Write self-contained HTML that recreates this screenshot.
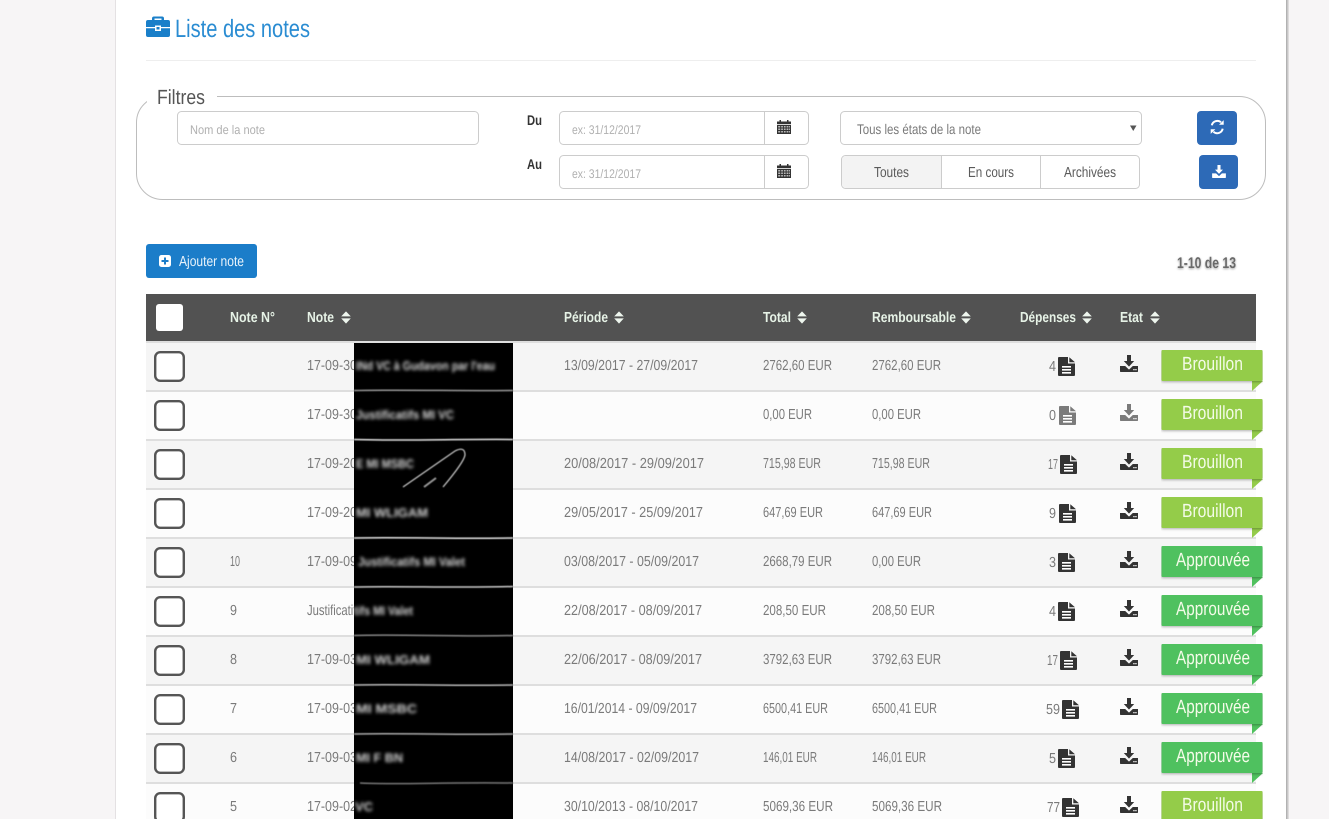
<!DOCTYPE html>
<html lang="fr"><head><meta charset="utf-8"><title>Liste des notes</title>
<style>
html,body{margin:0;padding:0;width:1329px;height:819px;overflow:hidden;background:#f7f5f6}
svg{display:block}
text{font-family:"Liberation Sans",sans-serif;text-rendering:geometricPrecision}
.c{font-size:14.500px;fill:#7a7a7a}
.h{font-size:14.500px;fill:#e6f2e6;font-weight:bold}
.b{font-size:19px;fill:#f4fbe8}
.p{font-size:12.500px;fill:#b0b0b0}
.g{font-size:14.500px;fill:#5a5a5a}
.r{font-size:12.500px;fill:#d8d8d8;filter:url(#bl);font-weight:bold}
</style></head><body>
<svg width="1329" height="819" viewBox="0 0 1329 819" xmlns="http://www.w3.org/2000/svg">
<defs>
<filter id="bl" x="-10%" y="-80%" width="120%" height="260%"><feGaussianBlur stdDeviation="1.500"/></filter>
<filter id="bl2" x="-10%" y="-60%" width="120%" height="220%"><feGaussianBlur stdDeviation=".6"/></filter>
<filter id="ts" x="-10%" y="-40%" width="120%" height="180%"><feDropShadow dx="0" dy="1" stdDeviation="1" flood-color="#000" flood-opacity=".35"/></filter>
<filter id="bs" x="-5%" y="-10%" width="110%" height="130%"><feDropShadow dx="0" dy="1" stdDeviation="1.200" flood-color="#000" flood-opacity=".3"/></filter>
<linearGradient id="sh" x1="0" x2="1" y1="0" y2="0"><stop offset="0" stop-color="#a8a8a8"/><stop offset="1" stop-color="#e8e6e7"/></linearGradient>
<symbol id="sort" viewBox="0 0 10 13" width="10" height="13"><path d="M.2 5.400 5 .4l4.800 5Z M.2 7.400h9.600L5 12.600Z" fill="#eef6ee"/></symbol>
<symbol id="doc" viewBox="0 0 17 19" width="17" height="19"><path d="M1 0H10V6.500H17V18a1 1 0 0 1-1 1H1a1 1 0 0 1-1-1V1a1 1 0 0 1 1-1Z M11.300 0.200 17 5.200H11.300Z" fill="currentColor"/><path d="M4 9h9v1.600H4Zm0 3h9v1.600H4Zm0 3h9v1.600H4Z" fill="#fff"/></symbol>
<symbol id="dl" viewBox="0 0 18 17" width="18" height="17"><path d="M7 0h4v6h3.200L9 11.600 3.800 6H7Z M0 11h5.200L9 14.600 12.800 11H18v5.200a.8.8 0 0 1-.8.8H.8a.8.8 0 0 1-.8-.8Z" fill="currentColor"/><path d="M13.300 14h1.300v1.300h-1.300Zm2 0h1.300v1.300h-1.300Z" fill="#fff"/></symbol>
<symbol id="cal" viewBox="0 0 14 14" width="14" height="14"><path d="M2.500 0h1.500v1.500h6V0h1.500v1.500H14V4H0V1.500h2.500Z" fill="#333"/><path d="M0 4.800h14V14H0Z" fill="#333"/><path d="M1.200 6h2v1.500h-2Zm3 0h1.700v1.500H4.200Zm2.700 0h1.700v1.500H6.900Zm2.700 0h1.700v1.500H9.600Zm2.300 0h1v1.500h-1ZM1.200 8.500h2V10h-2Zm3 0h1.700V10H4.200Zm2.700 0h1.700V10H6.900Zm2.700 0h1.700V10H9.600Zm2.300 0h1V10h-1ZM1.200 11h2v1.500h-2Zm3 0h1.700v1.500H4.200Zm2.700 0h1.700v1.500H6.900Zm2.700 0h1.700v1.500H9.600Zm2.300 0h1v1.500h-1Z" fill="#b9b9b9"/></symbol>
<symbol id="cb" viewBox="0 0 31 31" width="31" height="31"><rect x="1.200" y="1.200" width="28.600" height="28.600" rx="5" fill="#fff" stroke="#555" stroke-width="2.400"/></symbol>
<symbol id="bB" viewBox="0 0 102 42" width="102" height="42"><path d="M91 31h11L91 41Z" fill="#94cc4a"/><rect x="0.500" y="0" width="101" height="31" rx="1" fill="#94cc4a" filter="url(#bs)"/></symbol>
<symbol id="bA" viewBox="0 0 102 42" width="102" height="42"><path d="M91 31h11L91 41Z" fill="#50c15e"/><rect x="0.500" y="0" width="101" height="31" rx="1" fill="#50c15e" filter="url(#bs)"/></symbol>
</defs>

<!-- panel -->
<rect x="115" y="0" width="1" height="819" fill="#e4e1e3"/>
<rect x="116" y="0" width="1170" height="819" fill="#fff"/>
<rect x="1286" y="0" width="3" height="819" fill="url(#sh)"/>

<!-- title -->
<path d="M154 16.500h8a2 2 0 0 1 2 2V20h4a2 2 0 0 1 2 2v5h-9v-1.500h-6V27h-9v-5a2 2 0 0 1 2-2h4v-1.500a2 2 0 0 1 2-2Zm.500 2V20h7v-1.500Z" fill="#1a7fc9" fill-rule="evenodd"/>
<path d="M146 28.300h9V31h6v-2.700h9V35a2 2 0 0 1-2 2h-20a2 2 0 0 1-2-2Zm10.500-1.300h3v2.500h-3Z" fill="#1a7fc9"/>
<text x="175" y="37" font-size="25" fill="#2a8cd2" textLength="135" lengthAdjust="spacingAndGlyphs">Liste des notes</text>
<rect x="146" y="60" width="1110" height="1" fill="#eee"/>

<!-- filters -->
<rect x="136.500" y="96.500" width="1129" height="103" rx="26" fill="#fff" stroke="#bdbdbd"/>
<rect x="147" y="90" width="70" height="14" fill="#fff"/>
<text x="157" y="104" font-size="20.500" fill="#555" textLength="48" lengthAdjust="spacingAndGlyphs">Filtres</text>

<rect x="177.500" y="111.500" width="301" height="33" rx="4" fill="#fff" stroke="#ccc"/>
<text class="p" x="190" y="134" textLength="75" lengthAdjust="spacingAndGlyphs">Nom de la note</text>

<text x="527" y="125" font-size="14" font-weight="bold" fill="#333" textLength="15" lengthAdjust="spacingAndGlyphs">Du</text>
<text x="527" y="169" font-size="14" font-weight="bold" fill="#333" textLength="15" lengthAdjust="spacingAndGlyphs">Au</text>

<rect x="559.500" y="111.500" width="249" height="33" rx="4" fill="#fff" stroke="#ccc"/>
<rect x="764" y="112" width="1" height="32" fill="#ccc"/>
<text class="p" x="572" y="134" textLength="69" lengthAdjust="spacingAndGlyphs">ex: 31/12/2017</text>
<use href="#cal" x="777" y="120"/>
<rect x="559.500" y="155.500" width="249" height="33" rx="4" fill="#fff" stroke="#ccc"/>
<rect x="764" y="156" width="1" height="32" fill="#ccc"/>
<text class="p" x="572" y="178" textLength="69" lengthAdjust="spacingAndGlyphs">ex: 31/12/2017</text>
<use href="#cal" x="777" y="164"/>

<rect x="840.500" y="111.500" width="301" height="33" rx="4" fill="#fff" stroke="#ccc"/>
<text x="857" y="134" font-size="14" fill="#7a7a7a" textLength="124" lengthAdjust="spacingAndGlyphs">Tous les états de la note</text>
<path d="M1130 125.500h6.500l-3.250 5.500Z" fill="#555"/>

<rect x="841.500" y="155.500" width="298" height="33" rx="4" fill="#fff" stroke="#ccc"/>
<path d="M842 160a4 4 0 0 1 4-4h95.500v32H846a4 4 0 0 1-4-4Z" fill="#f3f3f3"/>
<rect x="941" y="156" width="1" height="32" fill="#ccc"/>
<rect x="1040" y="156" width="1" height="32" fill="#ccc"/>
<text class="g" x="874" y="177" textLength="35" lengthAdjust="spacingAndGlyphs">Toutes</text>
<text class="g" x="968" y="177" textLength="46" lengthAdjust="spacingAndGlyphs">En cours</text>
<text class="g" x="1064" y="177" textLength="52" lengthAdjust="spacingAndGlyphs">Archivées</text>

<rect x="1197" y="111" width="40" height="34" rx="4" fill="#2d6ab7"/>
<path d="M1211.800 125.300A5.600 5.600 0 0 1 1221 122.300M1222.700 128.700A5.600 5.600 0 0 1 1213.400 131.700" fill="none" stroke="#fff" stroke-width="2"/>
<path d="M1219 124.800h4.700v-4.700ZM1215.400 129.200h-4.700v4.700Z" fill="#fff"/>
<rect x="1199" y="155" width="39" height="34" rx="4" fill="#2d6ab7"/>
<g color="#fff"><use href="#dl" x="1212" y="165" width="14" height="13"/></g>

<!-- add button -->
<rect x="146" y="244" width="111" height="34" rx="3" fill="#1b7dc9"/>
<rect x="159" y="255" width="12" height="12" rx="2.500" fill="#fff"/>
<path d="M164 257.500h2v2.500h2.500v2H166v2.500h-2V262h-2.500v-2h2.500Z" fill="#1b7dc9"/>
<text x="179" y="266" font-size="14.500" fill="#e8f2fa" textLength="65" lengthAdjust="spacingAndGlyphs">Ajouter note</text>

<text x="1177" y="268" font-size="15.500" font-weight="bold" fill="#6a6a6a" filter="url(#ts)" textLength="59" lengthAdjust="spacingAndGlyphs">1-10 de 13</text>

<!-- table head -->
<rect x="146" y="294" width="1110" height="47" fill="#525252"/>
<rect x="156" y="304" width="27" height="27" rx="3" fill="#fff"/>
<text class="h" x="230" y="322" textLength="45" lengthAdjust="spacingAndGlyphs">Note N°</text>
<text class="h" x="307" y="322" textLength="27" lengthAdjust="spacingAndGlyphs">Note</text><use href="#sort" x="341" y="311"/>
<text class="h" x="564" y="322" textLength="44" lengthAdjust="spacingAndGlyphs">Période</text><use href="#sort" x="614" y="311"/>
<text class="h" x="763" y="322" textLength="28" lengthAdjust="spacingAndGlyphs">Total</text><use href="#sort" x="797" y="311"/>
<text class="h" x="872" y="322" textLength="84" lengthAdjust="spacingAndGlyphs">Remboursable</text><use href="#sort" x="961" y="311"/>
<text class="h" x="1020" y="322" textLength="56" lengthAdjust="spacingAndGlyphs">Dépenses</text><use href="#sort" x="1082" y="311"/>
<text class="h" x="1120" y="322" textLength="23" lengthAdjust="spacingAndGlyphs">Etat</text><use href="#sort" x="1150" y="311"/>

<!-- row backgrounds -->
<rect x="146" y="341" width="1110" height="478" fill="#fcfcfc"/>
<rect x="146" y="343" width="1110" height="47" fill="#f5f5f5"/>
<rect x="146" y="441" width="1110" height="47" fill="#f5f5f5"/>
<rect x="146" y="539" width="1110" height="47" fill="#f5f5f5"/>
<rect x="146" y="637" width="1110" height="47" fill="#f5f5f5"/>
<rect x="146" y="735" width="1110" height="47" fill="#f5f5f5"/>
<path d="M146 341h1110v2H146Zm0 49h1110v2H146Zm0 49h1110v2H146Zm0 49h1110v2H146Zm0 49h1110v2H146Zm0 49h1110v2H146Zm0 49h1110v2H146Zm0 49h1110v2H146Zm0 49h1110v2H146Zm0 49h1110v2H146Z" fill="#dedede"/>

<!-- row 1 -->
<use href="#cb" x="154" y="351"/>
<text class="c" x="307" y="370" textLength="50" lengthAdjust="spacingAndGlyphs">17-09-30</text>
<text class="c" x="564" y="370" textLength="134" lengthAdjust="spacingAndGlyphs">13/09/2017 - 27/09/2017</text>
<text class="c" x="763" y="370" textLength="69" lengthAdjust="spacingAndGlyphs">2762,60 EUR</text>
<text class="c" x="872" y="370" textLength="69" lengthAdjust="spacingAndGlyphs">2762,60 EUR</text>
<text class="c" x="1049" y="371" textLength="7" lengthAdjust="spacingAndGlyphs">4</text>
<g color="#333"><use href="#doc" x="1058" y="357"/><use href="#dl" x="1120" y="355"/></g>
<use href="#bB" x="1161" y="350"/>
<text class="b" x="1182" y="370" textLength="61" lengthAdjust="spacingAndGlyphs">Brouillon</text>

<!-- row 2 -->
<use href="#cb" x="154" y="400"/>
<text class="c" x="307" y="419" textLength="50" lengthAdjust="spacingAndGlyphs">17-09-30</text>
<text class="c" x="763" y="419" textLength="49" lengthAdjust="spacingAndGlyphs">0,00 EUR</text>
<text class="c" x="872" y="419" textLength="49" lengthAdjust="spacingAndGlyphs">0,00 EUR</text>
<text class="c" x="1049" y="420" textLength="7" lengthAdjust="spacingAndGlyphs">0</text>
<g color="#7b7b7b"><use href="#doc" x="1059" y="406"/><use href="#dl" x="1120" y="404"/></g>
<use href="#bB" x="1161" y="399"/>
<text class="b" x="1182" y="419" textLength="61" lengthAdjust="spacingAndGlyphs">Brouillon</text>

<!-- row 3 -->
<use href="#cb" x="154" y="449"/>
<text class="c" x="307" y="468" textLength="50" lengthAdjust="spacingAndGlyphs">17-09-20</text>
<text class="c" x="564" y="468" textLength="140" lengthAdjust="spacingAndGlyphs">20/08/2017 - 29/09/2017</text>
<text class="c" x="763" y="468" textLength="58" lengthAdjust="spacingAndGlyphs">715,98 EUR</text>
<text class="c" x="872" y="468" textLength="58" lengthAdjust="spacingAndGlyphs">715,98 EUR</text>
<text class="c" x="1048" y="469" textLength="10" lengthAdjust="spacingAndGlyphs">17</text>
<g color="#333"><use href="#doc" x="1060" y="455"/><use href="#dl" x="1120" y="453"/></g>
<use href="#bB" x="1161" y="448"/>
<text class="b" x="1182" y="468" textLength="61" lengthAdjust="spacingAndGlyphs">Brouillon</text>

<!-- row 4 -->
<use href="#cb" x="154" y="498"/>
<text class="c" x="307" y="517" textLength="50" lengthAdjust="spacingAndGlyphs">17-09-20</text>
<text class="c" x="564" y="517" textLength="139" lengthAdjust="spacingAndGlyphs">29/05/2017 - 25/09/2017</text>
<text class="c" x="763" y="517" textLength="60" lengthAdjust="spacingAndGlyphs">647,69 EUR</text>
<text class="c" x="872" y="517" textLength="60" lengthAdjust="spacingAndGlyphs">647,69 EUR</text>
<text class="c" x="1049" y="518" textLength="7" lengthAdjust="spacingAndGlyphs">9</text>
<g color="#333"><use href="#doc" x="1059" y="504"/><use href="#dl" x="1120" y="502"/></g>
<use href="#bB" x="1161" y="497"/>
<text class="b" x="1182" y="517" textLength="61" lengthAdjust="spacingAndGlyphs">Brouillon</text>

<!-- row 5 -->
<use href="#cb" x="154" y="547"/>
<text class="c" x="230" y="566" textLength="10" lengthAdjust="spacingAndGlyphs">10</text>
<text class="c" x="307" y="566" textLength="50" lengthAdjust="spacingAndGlyphs">17-09-09</text>
<text class="c" x="564" y="566" textLength="135" lengthAdjust="spacingAndGlyphs">03/08/2017 - 05/09/2017</text>
<text class="c" x="763" y="566" textLength="69" lengthAdjust="spacingAndGlyphs">2668,79 EUR</text>
<text class="c" x="872" y="566" textLength="49" lengthAdjust="spacingAndGlyphs">0,00 EUR</text>
<text class="c" x="1049" y="567" textLength="7" lengthAdjust="spacingAndGlyphs">3</text>
<g color="#333"><use href="#doc" x="1058" y="553"/><use href="#dl" x="1120" y="551"/></g>
<use href="#bA" x="1161" y="546"/>
<text class="b" x="1176" y="566" textLength="74" lengthAdjust="spacingAndGlyphs">Approuvée</text>

<!-- row 6 -->
<use href="#cb" x="154" y="596"/>
<text class="c" x="230" y="615" textLength="7" lengthAdjust="spacingAndGlyphs">9</text>
<text class="c" x="307" y="615" textLength="55" lengthAdjust="spacingAndGlyphs">Justificatifs</text>
<text class="c" x="564" y="615" textLength="138" lengthAdjust="spacingAndGlyphs">22/08/2017 - 08/09/2017</text>
<text class="c" x="763" y="615" textLength="63" lengthAdjust="spacingAndGlyphs">208,50 EUR</text>
<text class="c" x="872" y="615" textLength="63" lengthAdjust="spacingAndGlyphs">208,50 EUR</text>
<text class="c" x="1049" y="616" textLength="7" lengthAdjust="spacingAndGlyphs">4</text>
<g color="#333"><use href="#doc" x="1058" y="602"/><use href="#dl" x="1120" y="600"/></g>
<use href="#bA" x="1161" y="595"/>
<text class="b" x="1176" y="615" textLength="74" lengthAdjust="spacingAndGlyphs">Approuvée</text>

<!-- row 7 -->
<use href="#cb" x="154" y="645"/>
<text class="c" x="230" y="664" textLength="7" lengthAdjust="spacingAndGlyphs">8</text>
<text class="c" x="307" y="664" textLength="50" lengthAdjust="spacingAndGlyphs">17-09-03</text>
<text class="c" x="564" y="664" textLength="138" lengthAdjust="spacingAndGlyphs">22/06/2017 - 08/09/2017</text>
<text class="c" x="763" y="664" textLength="69" lengthAdjust="spacingAndGlyphs">3792,63 EUR</text>
<text class="c" x="872" y="664" textLength="69" lengthAdjust="spacingAndGlyphs">3792,63 EUR</text>
<text class="c" x="1047" y="665" textLength="11" lengthAdjust="spacingAndGlyphs">17</text>
<g color="#333"><use href="#doc" x="1060" y="651"/><use href="#dl" x="1120" y="649"/></g>
<use href="#bA" x="1161" y="644"/>
<text class="b" x="1176" y="664" textLength="74" lengthAdjust="spacingAndGlyphs">Approuvée</text>

<!-- row 8 -->
<use href="#cb" x="154" y="694"/>
<text class="c" x="230" y="713" textLength="7" lengthAdjust="spacingAndGlyphs">7</text>
<text class="c" x="307" y="713" textLength="50" lengthAdjust="spacingAndGlyphs">17-09-03</text>
<text class="c" x="564" y="713" textLength="133" lengthAdjust="spacingAndGlyphs">16/01/2014 - 09/09/2017</text>
<text class="c" x="763" y="713" textLength="65" lengthAdjust="spacingAndGlyphs">6500,41 EUR</text>
<text class="c" x="872" y="713" textLength="65" lengthAdjust="spacingAndGlyphs">6500,41 EUR</text>
<text class="c" x="1046" y="714" textLength="14" lengthAdjust="spacingAndGlyphs">59</text>
<g color="#333"><use href="#doc" x="1062" y="700"/><use href="#dl" x="1120" y="698"/></g>
<use href="#bA" x="1161" y="693"/>
<text class="b" x="1176" y="713" textLength="74" lengthAdjust="spacingAndGlyphs">Approuvée</text>

<!-- row 9 -->
<use href="#cb" x="154" y="743"/>
<text class="c" x="230" y="762" textLength="7" lengthAdjust="spacingAndGlyphs">6</text>
<text class="c" x="307" y="762" textLength="50" lengthAdjust="spacingAndGlyphs">17-09-03</text>
<text class="c" x="564" y="762" textLength="135" lengthAdjust="spacingAndGlyphs">14/08/2017 - 02/09/2017</text>
<text class="c" x="763" y="762" textLength="54" lengthAdjust="spacingAndGlyphs">146,01 EUR</text>
<text class="c" x="872" y="762" textLength="54" lengthAdjust="spacingAndGlyphs">146,01 EUR</text>
<text class="c" x="1049" y="763" textLength="7" lengthAdjust="spacingAndGlyphs">5</text>
<g color="#333"><use href="#doc" x="1058" y="749"/><use href="#dl" x="1120" y="747"/></g>
<use href="#bA" x="1161" y="742"/>
<text class="b" x="1176" y="762" textLength="74" lengthAdjust="spacingAndGlyphs">Approuvée</text>

<!-- row 10 -->
<use href="#cb" x="154" y="792"/>
<text class="c" x="230" y="811" textLength="7" lengthAdjust="spacingAndGlyphs">5</text>
<text class="c" x="307" y="811" textLength="50" lengthAdjust="spacingAndGlyphs">17-09-02</text>
<text class="c" x="564" y="811" textLength="134" lengthAdjust="spacingAndGlyphs">30/10/2013 - 08/10/2017</text>
<text class="c" x="763" y="811" textLength="70" lengthAdjust="spacingAndGlyphs">5069,36 EUR</text>
<text class="c" x="872" y="811" textLength="70" lengthAdjust="spacingAndGlyphs">5069,36 EUR</text>
<text class="c" x="1047" y="812" textLength="13" lengthAdjust="spacingAndGlyphs">77</text>
<g color="#333"><use href="#doc" x="1062" y="798"/><use href="#dl" x="1120" y="796"/></g>
<use href="#bB" x="1161" y="791"/>
<text class="b" x="1182" y="811" textLength="61" lengthAdjust="spacingAndGlyphs">Brouillon</text>

<!-- redaction -->
<rect x="354" y="343" width="159" height="476" fill="#000"/>
<g fill="none" stroke="#e4e4e4" stroke-width="1.500" filter="url(#bl2)">
<path d="M354 390.500C400 389.500 460 391 513 390.500" stroke="#999"/>
<path d="M354 439.500C400 441 460 439 513 439.500"/>
<path d="M354 538C400 537 460 539 513 538"/>
<path d="M354 587C400 586 460 588 513 586.500" stroke="#ccc"/>
<path d="M354 635.500C400 634 460 637 513 635.500" stroke="#888"/>
<path d="M354 685C400 684 460 686 513 685" stroke="#bbb"/>
<path d="M354 734C400 733 460 735 513 734" stroke="#aaa"/>
<path d="M360 783C400 785 440 782 513 783" stroke="#777"/>
<path d="M403 487 455 451Q465 446 465 455Q464 462 443 487" stroke="#ccc" stroke-width="1.200"/>
<path d="M424 487 436 478" stroke="#999" stroke-width="2"/>
</g>
<text class="r" x="356" y="370" textLength="139" lengthAdjust="spacingAndGlyphs">INd VC à Gudavon par l'eau</text>
<text class="r" x="356" y="419" textLength="98" lengthAdjust="spacingAndGlyphs">Justificatifs MI VC</text>
<text class="r" x="356" y="468" textLength="58" lengthAdjust="spacingAndGlyphs">E MI MSBC</text>
<text class="r" x="356" y="517" textLength="72" lengthAdjust="spacingAndGlyphs">MI WLIGAM</text>
<text class="r" x="358" y="566" textLength="107" lengthAdjust="spacingAndGlyphs">Justificatifs MI Valet</text>
<text class="r" x="354" y="615" textLength="59" lengthAdjust="spacingAndGlyphs">tifs MI Valet</text>
<text class="r" x="356" y="664" textLength="74" lengthAdjust="spacingAndGlyphs">MI WLIGAM</text>
<text class="r" x="356" y="713" textLength="61" lengthAdjust="spacingAndGlyphs">MI MSBC</text>
<text class="r" x="356" y="762" textLength="47" lengthAdjust="spacingAndGlyphs">MI F BN</text>
<text class="r" x="355" y="811" textLength="18" lengthAdjust="spacingAndGlyphs">VC</text>
</svg>
</body></html>
